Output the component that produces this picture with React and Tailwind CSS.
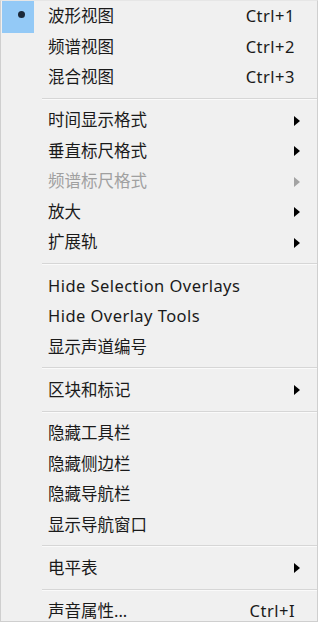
import React from 'react';

const menu = [
  { label: '波形视图', shortcut: 'Ctrl+1', checked: true },
  { label: '频谱视图', shortcut: 'Ctrl+2' },
  { label: '混合视图', shortcut: 'Ctrl+3' },
  { sep: true },
  { label: '时间显示格式', sub: true },
  { label: '垂直标尺格式', sub: true },
  { label: '频谱标尺格式', sub: true, disabled: true },
  { label: '放大', sub: true },
  { label: '扩展轨', sub: true },
  { sep: true },
  { label: 'Hide Selection Overlays', latin: true },
  { label: 'Hide Overlay Tools', latin: true },
  { label: '显示声道编号' },
  { sep: true },
  { label: '区块和标记', sub: true },
  { sep: true },
  { label: '隐藏工具栏' },
  { label: '隐藏侧边栏' },
  { label: '隐藏导航栏' },
  { label: '显示导航窗口' },
  { sep: true },
  { label: '电平表', sub: true },
  { sep: true },
  { label: '声音属性...', shortcut: 'Ctrl+I' },
];

const Arrow = ({ disabled }) => (
  <svg width="6" height="10" viewBox="0 0 6 10" className="mr-[17px]">
    <path d="M0 0 L6 5 L0 10 Z" fill={disabled ? '#a3a3a3' : '#000'} />
  </svg>
);

const MenuItem = ({ item }) => (
  <div className="relative flex items-center h-[30.5px] shrink-0">
    {item.checked && (
      <div className="absolute left-[1px] top-0 w-[32px] h-[32px] bg-[#93c9f6] flex items-center justify-center">
        <span className="w-[7px] h-[7px] rounded-full bg-[#1b2838] -mt-[6px] ml-[6px]" />
      </div>
    )}
    <span
      className={`pl-[47px] flex-1 ${item.latin ? 'tracking-[0.45px]' : ''} ${
        item.disabled ? 'text-[#a0a0a0]' : 'text-[#1a1a1a]'
      }`}
    >
      {item.label}
    </span>
    {item.shortcut && <span className="pr-[22px] text-[#1a1a1a] tracking-[0.5px]">{item.shortcut}</span>}
    {item.sub && <Arrow disabled={item.disabled} />}
  </div>
);

export default function App() {
  return (
    <div className="w-[320px] h-[623px] bg-white overflow-hidden">
      <div
        className="w-[318px] h-[622px] bg-[#f0f0f0] border border-[#cfcfcf] border-t-[#e6e6e6] flex flex-col overflow-hidden text-[16.5px] leading-none"
        style={{ fontFamily: '"Noto Sans", "Noto Sans CJK SC", sans-serif' }}
      >
        {menu.map((item, i) =>
          item.sep ? (
            <div key={i} className="h-[12.75px] shrink-0 flex flex-col justify-center pl-[41px]">
              <div className="h-px bg-[#d6d6d6]" />
              <div className="h-px bg-[#fafafa]" />
            </div>
          ) : (
            <MenuItem key={i} item={item} />
          )
        )}
      </div>
    </div>
  );
}
